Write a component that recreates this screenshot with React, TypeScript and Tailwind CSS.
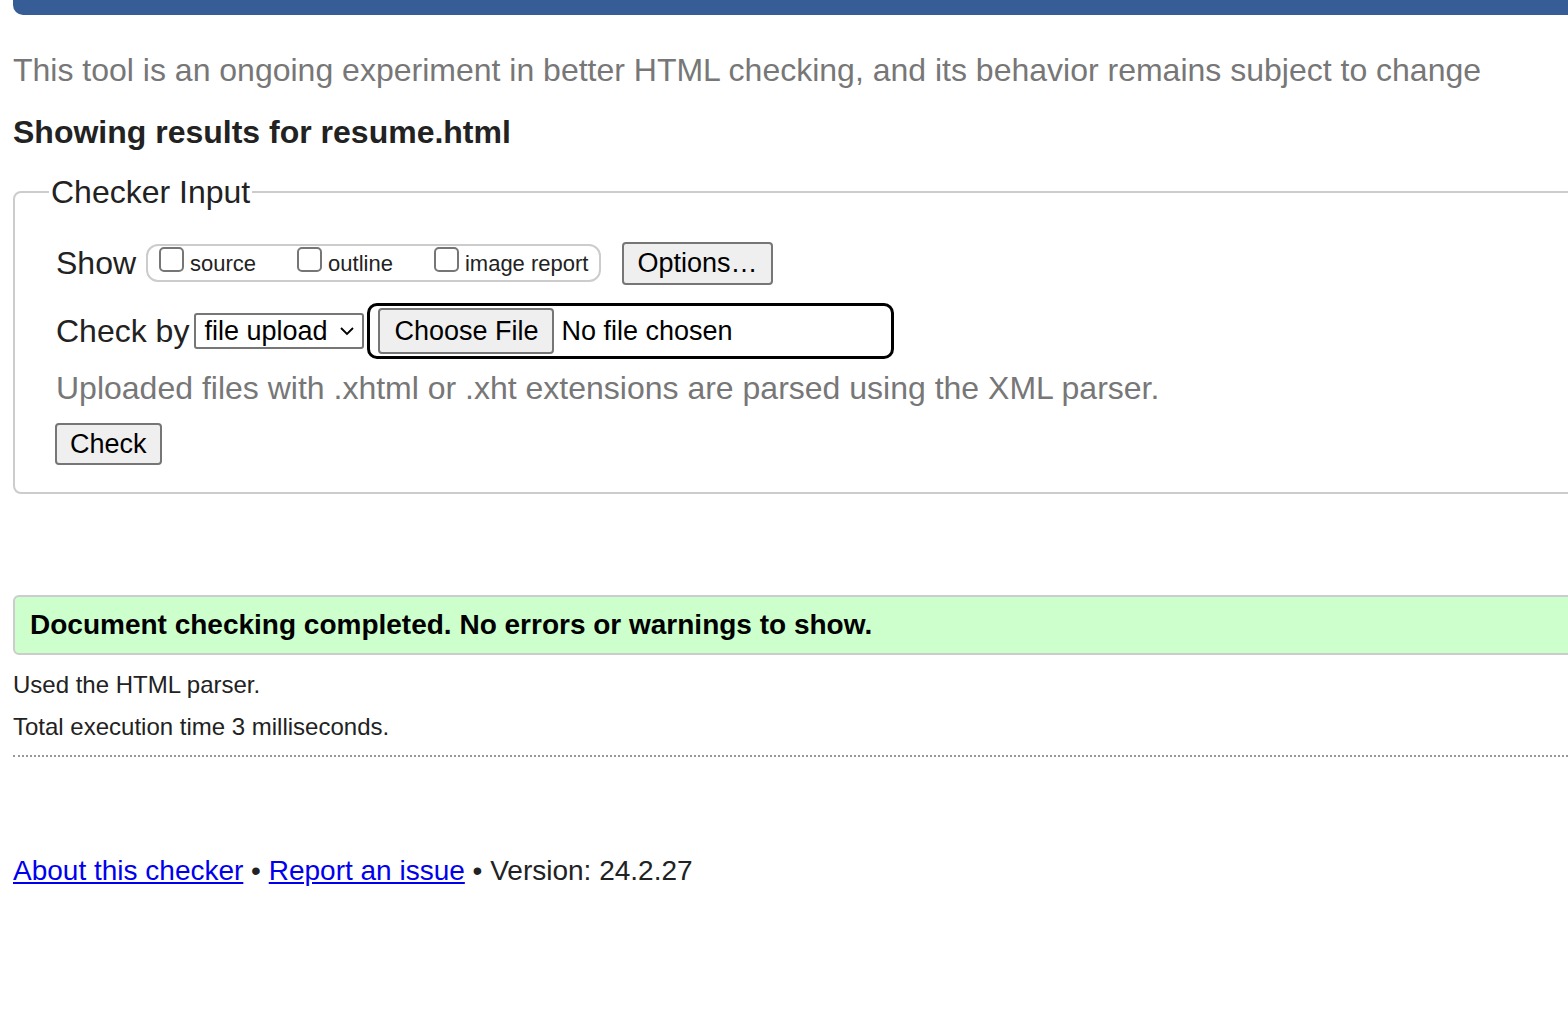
import React from "react";

export default function App() {
  return (
    <div className="w-[1568px] h-[1033px] overflow-hidden bg-white" style={{ fontFamily: '"Liberation Sans", Arial, sans-serif' }}>
      <div className="pl-[13px]">
        <div className="h-[15px] bg-[#365d95] rounded-bl-[10px] mr-[-20px]" />
        <p className="mt-[36px] text-[32px] leading-[38px] text-[#777] whitespace-nowrap">
          This tool is an ongoing experiment in better HTML checking, and its behavior remains subject to change
        </p>
        <h2 className="mt-[24px] text-[32px] leading-[38px] font-bold text-[#222]">Showing results for resume.html</h2>
        <fieldset className="mt-[22px] mr-[-20px] border-2 border-[#ccc] rounded-[8px] pl-[41px] pb-[27px] pt-[10px]">
          <legend className="-ml-[7px] px-[2px] text-[32px] leading-[38px] text-[#222]">Checker Input</legend>
          <div className="flex items-center mt-[20px] h-[44px]">
            <span className="text-[32px] text-[#222]">Show</span>
            <div className="ml-[10px] h-[38px] border-2 border-[#ccc] rounded-[12px] flex items-center px-[11px] gap-[41px]">
              {["source", "outline", "image report"].map((l) => (
                <label key={l} className="flex items-center gap-[6px]">
                  <span className="w-[25px] h-[25px] border-2 border-[#767676] rounded-[5px] bg-white -mt-[8px]" />
                  <span className="text-[22px] text-[#222]">{l}</span>
                </label>
              ))}
            </div>
            <button className="ml-[21px] h-[43px] px-[13px] bg-[#efefef] border-2 border-[#767676] rounded-[4px] text-[27px] text-black leading-none">
              Options…
            </button>
          </div>
          <div className="flex items-center mt-[18px] h-[56px]">
            <span className="text-[32px] text-[#222]">Check by</span>
            <div className="ml-[5px] h-[36px] w-[170px] border-2 border-[#767676] rounded-[3px] flex items-center pl-[8px] pr-[6px] justify-between">
              <span className="text-[27px] text-black leading-none">file upload</span>
              <svg width="18" height="18" viewBox="0 0 18 18"><path d="M3 6l6 6 6-6" fill="none" stroke="#000" strokeWidth="1.8" /></svg>
            </div>
            <div className="ml-[3px] h-[56px] w-[527px] border-[3px] border-black rounded-[10px] flex items-center pl-[8px]">
              <button className="h-[46px] px-[14px] bg-[#efefef] border-2 border-[#767676] rounded-[4px] text-[27px] text-black leading-none">Choose File</button>
              <span className="ml-[7px] text-[27px] text-black">No file chosen</span>
            </div>
          </div>
          <p className="mt-[10px] text-[32px] leading-[38px] text-[#777] whitespace-nowrap">Uploaded files with .xhtml or .xht extensions are parsed using the XML parser.</p>
          <button className="mt-[16px] -ml-[1px] h-[42px] px-[13px] bg-[#efefef] border-2 border-[#767676] rounded-[4px] text-[27px] text-black leading-none">Check</button>
        </fieldset>
        <div className="mt-[101px] mr-[-20px] h-[60px] bg-[#ccffcc] border-2 border-[#ccc] rounded-[6px] flex items-center pl-[15px]">
          <span className="text-[28px] font-bold text-black">Document checking completed. No errors or warnings to show.</span>
        </div>
        <p className="mt-[16px] text-[24px] leading-[28px] text-[#222]">Used the HTML parser.</p>
        <p className="mt-[14px] text-[24px] leading-[28px] text-[#222]">Total execution time 3 milliseconds.</p>
        <div className="mt-[14px] border-t-2 border-dotted border-[#999] mr-[-20px]" />
        <p className="mt-[97px] text-[28px] leading-[34px] text-[#222]">
          <a className="text-[#0000ee] underline" href="#">About this checker</a> • <a className="text-[#0000ee] underline" href="#">Report an issue</a> • Version: 24.2.27
        </p>
      </div>
    </div>
  );
}
